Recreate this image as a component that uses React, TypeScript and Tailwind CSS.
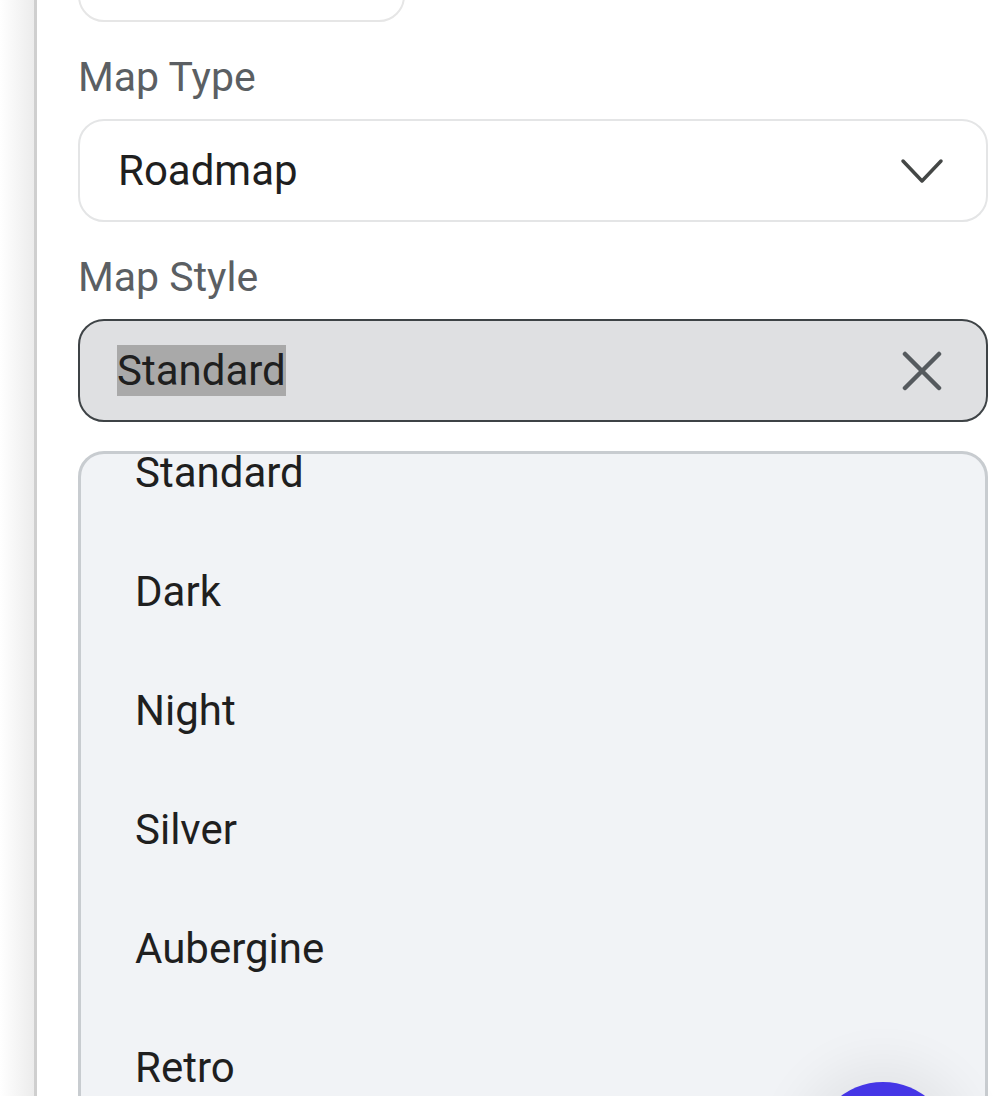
import React from 'react';

const styles = ['Standard', 'Dark', 'Night', 'Silver', 'Aubergine', 'Retro', 'Hybrid'];

const Chevron = () => (
  <svg width="44" height="28" viewBox="0 0 44 28" fill="none" stroke="#444746" strokeWidth="3.5" strokeLinecap="round" strokeLinejoin="round">
    <path d="M3 4 L22 24 L41 4" />
  </svg>
);

const Cross = () => (
  <svg width="40" height="40" viewBox="0 0 40 40" fill="none" stroke="#555a5e" strokeWidth="4.5" strokeLinecap="round">
    <path d="M3 3 L37 37 M37 3 L3 37" />
  </svg>
);

const App: React.FC = () => {
  return (
    <div
      className="relative flex h-[1096px] w-[1000px] overflow-hidden bg-white text-[#1f1f1f]"
      style={{ fontFamily: 'Roboto, "Open Sans", sans-serif' }}
    >
      {/* left edge shadow + divider */}
      <div className="h-full w-[34px] shrink-0 bg-gradient-to-r from-white to-[#ececec]" />
      <div className="h-full w-[3px] shrink-0 bg-[#cfcfcf]" />

      <div className="flex flex-1 flex-col pl-[41px] pr-[12px]">
        <div className="-mt-[80px] h-[102px] w-[327px] shrink-0 rounded-[26px] border-2 border-[#e6e6e6]" />

        <div className="mt-[33px] shrink-0 text-[41px] leading-[44px] text-[#5b5f63]">Map Type</div>
        <div className="mt-[20px] flex h-[103px] shrink-0 items-center justify-between rounded-[26px] border-2 border-[#e4e5e6] pl-[38px] pr-[42px]">
          <span className="text-[42px]">Roadmap</span>
          <Chevron />
        </div>

        <div className="mt-[33px] shrink-0 text-[41px] leading-[44px] text-[#5b5f63]">Map Style</div>
        <div className="mt-[20px] flex h-[103px] shrink-0 items-center justify-between rounded-[26px] border-2 border-[#3e4346] bg-[#dfe0e2] pl-[37px] pr-[44px]">
          <span className="bg-[#a9a9a9] text-[42px] leading-[51px]">Standard</span>
          <Cross />
        </div>

        <div className="mt-[29px] h-[700px] shrink-0 overflow-hidden rounded-[26px] border-[3px] border-[#c8ccd0] bg-[#f1f3f6]">
          <div className="-mt-[41px] flex flex-col">
            {styles.map((s) => (
              <div key={s} className="flex h-[119px] shrink-0 items-center pl-[54px] text-[42px]">
                {s}
              </div>
            ))}
          </div>
        </div>
      </div>

      {/* floating action button peeking in */}
      <div className="absolute left-[813px] top-[1082px] h-[140px] w-[140px] rounded-full bg-[#4536e6] shadow-[0_0_50px_20px_rgba(0,0,0,0.06)]" />
    </div>
  );
};

export default App;
